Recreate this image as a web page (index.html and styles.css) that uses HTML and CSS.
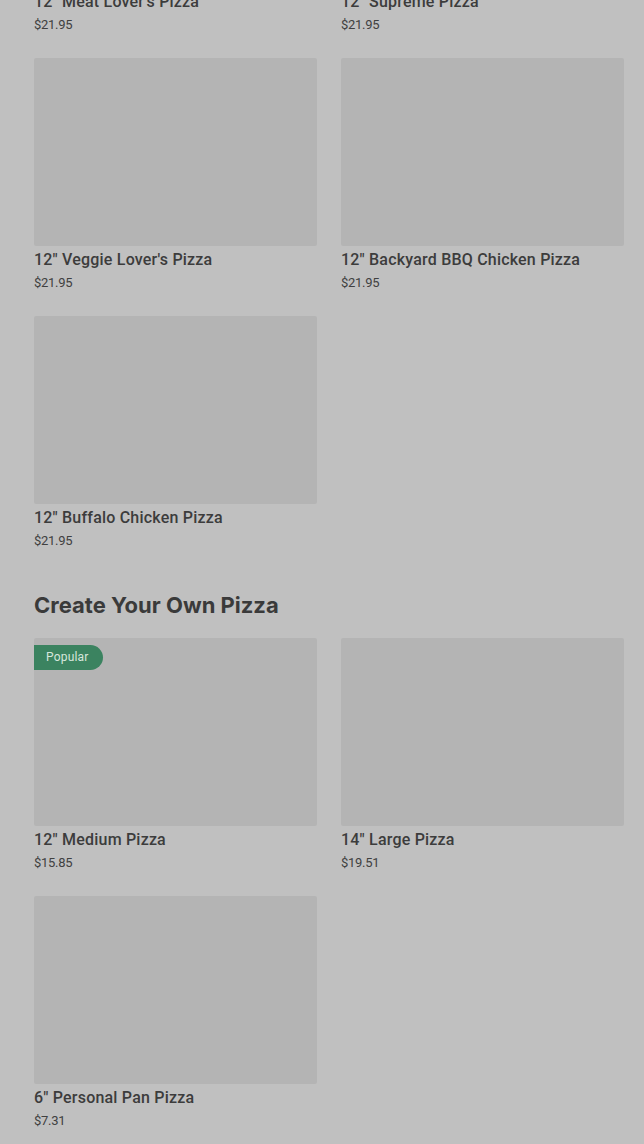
FILE: index.html
```html
<!DOCTYPE html>
<html lang="en">

<head>
    <meta charset="UTF-8">
    <meta name="viewport" content="width=device-width, initial-scale=1.0">
    <title>Pizza Menu</title>
    <link rel="stylesheet" href="styles.css">
</head>

<body>
    <div class="menu">
        <div class="section">
            <ul class="grid">
                <li class="card">
                    <div class="card-img"></div>
                    <p class="card-name">12" Meat Lover's Pizza</p>
                    <p class="card-price">$21.95</p>
                </li>
                <li class="card">
                    <div class="card-img"></div>
                    <p class="card-name">12" Supreme Pizza</p>
                    <p class="card-price">$21.95</p>
                </li>
                <li class="card">
                    <div class="card-img"></div>
                    <p class="card-name">12" Veggie Lover's Pizza</p>
                    <p class="card-price">$21.95</p>
                </li>
                <li class="card">
                    <div class="card-img"></div>
                    <p class="card-name">12" Backyard BBQ Chicken Pizza</p>
                    <p class="card-price">$21.95</p>
                </li>
                <li class="card">
                    <div class="card-img"></div>
                    <p class="card-name">12" Buffalo Chicken Pizza</p>
                    <p class="card-price">$21.95</p>
                </li>
            </ul>
        </div>

        <div class="section">
            <h2 class="section-title">Create Your Own Pizza</h2>
            <ul class="grid">
                <li class="card">
                    <div class="card-img">
                        <span class="badge">Popular</span>
                    </div>
                    <p class="card-name">12" Medium Pizza</p>
                    <p class="card-price">$15.85</p>
                </li>
                <li class="card">
                    <div class="card-img"></div>
                    <p class="card-name">14" Large Pizza</p>
                    <p class="card-price">$19.51</p>
                </li>
                <li class="card">
                    <div class="card-img"></div>
                    <p class="card-name">6" Personal Pan Pizza</p>
                    <p class="card-price">$7.31</p>
                </li>
            </ul>
        </div>
    </div>
</body>

</html>
```

FILE: styles.css
```css
* {
    margin: 0;
    padding: 0;
    box-sizing: border-box;
}

li {
    list-style: none;
}

body {
    background-color: #c0c0c0;
    color: #363636;
    font-family: Roboto, "Liberation Sans", sans-serif;
}

.menu {
    margin-top: -200px;
    padding: 0 20px 0 34px;
}

.section-title {
    margin-top: 40px;
    margin-bottom: 19px;
    font-family: Inter, "Liberation Sans", sans-serif;
    font-size: 22px;
    line-height: 28px;
    font-weight: 700;
    color: #3a3a3a;
}

.grid {
    display: grid;
    grid-template-columns: 1fr 1fr;
    column-gap: 24px;
    row-gap: 23px;
}

.card-img {
    position: relative;
    height: 188px;
    background-color: #b4b4b4;
    border-radius: 2px;
}

.card-name {
    margin-top: 3px;
    font-size: 16px;
    line-height: 22px;
    font-weight: 500;
    letter-spacing: 0.2px;
    color: #3c3c3c;
}

.card-price {
    margin-top: 2px;
    font-size: 13px;
    line-height: 20px;
    letter-spacing: -0.3px;
    color: #404040;
}

.badge {
    position: absolute;
    top: 7px;
    left: 0;
    height: 25px;
    padding: 0 14px 0 12px;
    line-height: 25px;
    font-size: 12px;
    letter-spacing: 0.2px;
    color: #d6e6dc;
    background-color: #3b8360;
    border-radius: 0 13px 13px 0;
}
```
